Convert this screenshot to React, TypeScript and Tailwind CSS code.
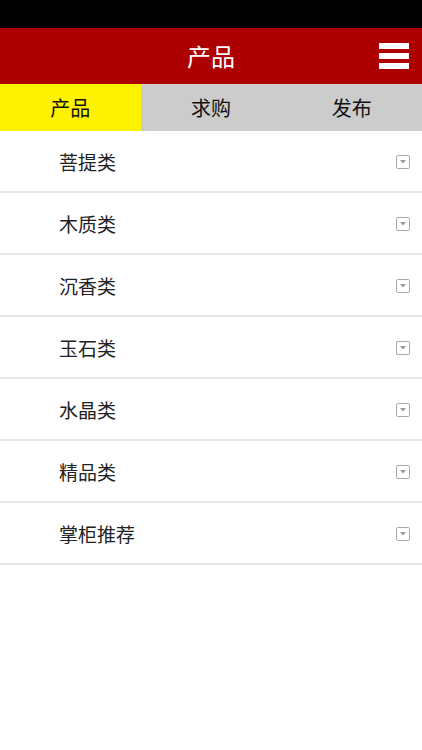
import React from "react";

const items = ["菩提类", "木质类", "沉香类", "玉石类", "水晶类", "精品类", "掌柜推荐"];
const font = { fontFamily: '"Noto Sans CJK SC", "Noto Sans", sans-serif' };

export default function App() {
  return (
    <div className="w-[422px] h-[750px] bg-white flex flex-col" style={font}>
      <div className="h-[28px] bg-black" />
      <div className="h-[56px] bg-[#ad0000] relative flex items-center justify-center">
        <span className="text-white text-[24px] leading-none">产品</span>
        <div className="absolute right-[13px] top-[15px] flex flex-col gap-[4px]">
          <div className="w-[30px] h-[6px] bg-white" />
          <div className="w-[30px] h-[6px] bg-white" />
          <div className="w-[30px] h-[6px] bg-white" />
        </div>
      </div>
      <div className="h-[47px] grid grid-cols-3 bg-[#cccccc] text-[20px] text-[#111]">
        <div className="bg-[#fff200] flex items-center justify-center">产品</div>
        <div className="flex items-center justify-center">求购</div>
        <div className="flex items-center justify-center">发布</div>
      </div>
      <div className="flex flex-col">
        {items.map((t) => (
          <div key={t} className="h-[62px] border-b-2 border-[#e8e8e8] flex items-center justify-between pl-[59px] pr-[12px] pt-[2px]">
            <span className="text-[19px] text-[#222]">{t}</span>
            <div className="w-[14px] h-[14px] border border-[#aaa] rounded-[2px] flex items-center justify-center">
              <svg width="6" height="4" viewBox="0 0 6 4"><path d="M0 0 L6 0 L3 3.5 Z" fill="#999" /></svg>
            </div>
          </div>
        ))}
      </div>
    </div>
  );
}
